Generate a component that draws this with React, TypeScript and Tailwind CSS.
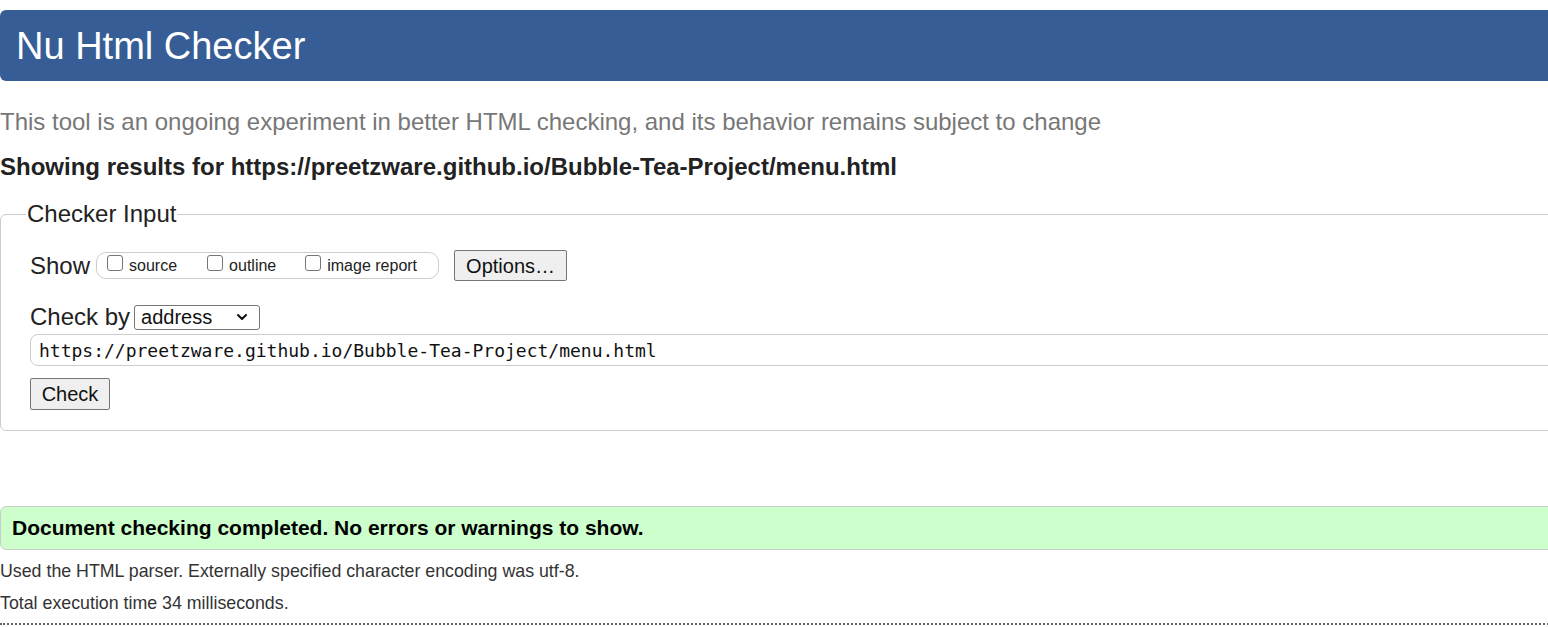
import { ChevronDown } from "lucide-react";

function Checkbox({ label, gap }: { label: string; gap: string }) {
  return (
    <label className={`flex items-center ${gap}`}>
      <span className="mt-[-6px] mr-[6px] size-[16px] rounded-[3px] border border-[#767676] bg-white" />
      <span className="text-[16px] text-[#222]">{label}</span>
    </label>
  );
}

export default function App() {
  return (
    <div className="w-[1548px] h-[627px] overflow-hidden bg-white font-['Liberation_Sans',Arial,sans-serif] text-[#222]">
      <div className="w-[1580px]">
        <header className="mt-[10px] flex h-[71px] items-center rounded-[6px] bg-[#365d95] pl-[16px]">
          <h1 className="text-[38px] leading-none text-white">Nu Html Checker</h1>
        </header>

        <p className="mt-[27px] text-[24px] leading-[28px] text-[#777]">
          This tool is an ongoing experiment in better HTML checking, and its behavior remains subject to change
        </p>
        <p className="mt-[17px] text-[24px] font-bold leading-[28px] text-[#222]">
          Showing results for https://preetzware.github.io/Bubble-Tea-Project/menu.html
        </p>

        <fieldset className="mt-[19px] h-[231px] rounded-[6px] border border-[#ccc] pl-[29px] pt-[4px]">
          <legend className="ml-[-4px] px-[1px] text-[24px] leading-[28px] text-[#222]">Checker Input</legend>

          <div className="mt-[18px] flex items-center">
            <span className="text-[24px] leading-[28px]">Show</span>
            <div className="ml-[6px] flex h-[27px] w-[343px] items-center rounded-[10px] border border-[#ccc] pl-[10px]">
              <Checkbox label="source" gap="mr-[30px]" />
              <Checkbox label="outline" gap="mr-[29px]" />
              <Checkbox label="image report" gap="" />
            </div>
            <button className="ml-[15px] h-[31px] w-[113px] rounded-[2px] border border-[#767676] bg-[#efefef] text-[20px] leading-none text-[#111]">
              Options…
            </button>
          </div>

          <div className="mt-[22px] flex items-center">
            <span className="text-[24px] leading-[28px]">Check by</span>
            <div className="ml-[4px] flex h-[25px] w-[126px] items-center justify-between rounded-[3px] border border-[#767676] pl-[6px] pr-[9px]">
              <span className="text-[20px] leading-none text-[#111]">address</span>
              <ChevronDown className="size-[16px] text-[#111]" strokeWidth={3} />
            </div>
          </div>

          <div className="mt-[3px] flex h-[32px] items-center rounded-l-[8px] border border-[#ccc] pl-[8px]">
            <span className="font-['DejaVu_Sans_Mono',monospace] text-[18px] text-[#111]">
              https://preetzware.github.io/Bubble-Tea-Project/menu.html
            </span>
          </div>

          <button className="mt-[12px] h-[32px] w-[80px] rounded-[2px] border border-[#767676] bg-[#efefef] text-[20px] leading-none text-[#111]">
            Check
          </button>
        </fieldset>

        <div className="mt-[75px] flex h-[44px] items-center rounded-l-[6px] border border-[#ccc] bg-[#ccffcc] pl-[11px]">
          <span className="text-[21px] font-bold text-black">
            Document checking completed. No errors or warnings to show.
          </span>
        </div>

        <p className="mt-[10px] text-[17.8px] leading-[22px] text-[#333]">
          Used the HTML parser. Externally specified character encoding was utf-8.
        </p>
        <p className="mt-[10px] text-[17.8px] leading-[22px] text-[#333]">Total execution time 34 milliseconds.</p>
        <div className="mt-[9px] border-t-2 border-dotted border-[#666]" />
      </div>
    </div>
  );
}
